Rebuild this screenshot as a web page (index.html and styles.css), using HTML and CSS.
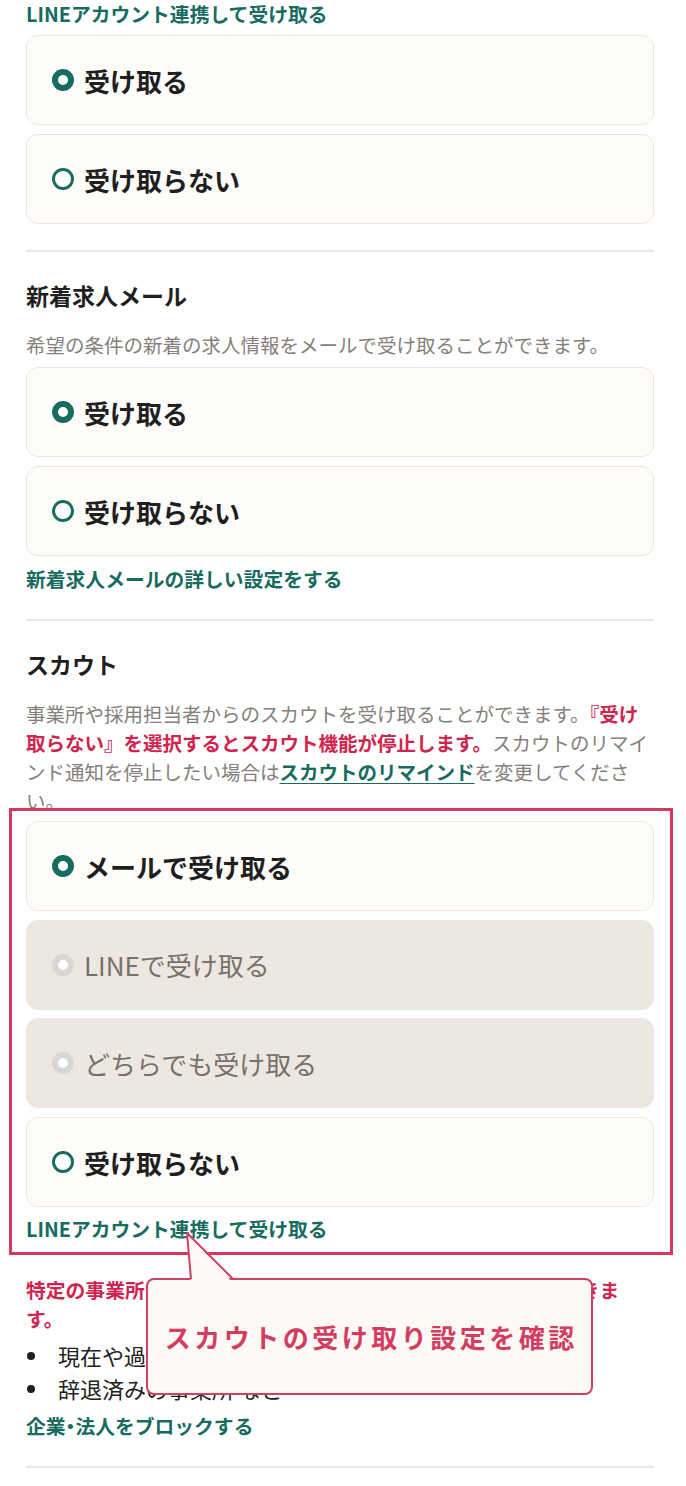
FILE: index.html
```html
<!DOCTYPE html>
<html lang="ja">
<head>
  <meta charset="UTF-8" />
  <title>受け取り設定</title>
  <link rel="stylesheet" href="styles.css">
</head>
<body>
  <div class="page">
    <a class="link" href="#">LINEアカウント連携して受け取る</a>
    <div class="options top">
      <label class="option"><span class="radio checked"></span>受け取る</label>
      <label class="option"><span class="radio"></span>受け取らない</label>
    </div>

    <hr class="divider">

    <!-- 新着求人メール -->
    <section>
      <h3 class="heading">新着求人メール</h3>
      <p class="desc">希望の条件の新着の求人情報をメールで受け取ることができます。</p>
      <div class="options">
        <label class="option"><span class="radio checked"></span>受け取る</label>
        <label class="option"><span class="radio"></span>受け取らない</label>
      </div>
      <a class="link after" href="#">新着求人メールの詳しい設定をする</a>
    </section>

    <hr class="divider">

    <!-- スカウト -->
    <section>
      <h3 class="heading">スカウト</h3>
      <p class="desc">事業所や採用担当者からのスカウトを受け取ることができます。<strong class="warn">『受け取らない』を選択するとスカウト機能が停止します。</strong>スカウトのリマインド通知を停止したい場合は<a class="inline-link" href="#">スカウトのリマインド</a>を変更してください。</p>

      <div class="highlight">
        <div class="options scout">
          <label class="option"><span class="radio checked"></span>メールで受け取る</label>
          <label class="option disabled"><span class="radio"></span>LINEで受け取る</label>
          <label class="option disabled"><span class="radio"></span>どちらでも受け取る</label>
          <label class="option"><span class="radio"></span>受け取らない</label>
        </div>
        <a class="link after" href="#">LINEアカウント連携して受け取る</a>
      </div>

      <p class="notice">特定の事業所からスカウトを受け取らないようにすることができます。</p>
      <ul class="bullets">
        <li>現在や過去に勤務した事業所</li>
        <li>辞退済みの事業所 など</li>
      </ul>
      <a class="link block-link" href="#">企業<span class="dot">・</span>法人をブロックする</a>
    </section>

    <hr class="divider">
  </div>

  <div class="callout">
    <svg class="tail" width="60" height="56" viewBox="0 0 60 56">
      <polygon points="7,3 11,53 53,53" fill="#fdfaf5" />
      <polyline points="11,49 7,3 53,49" fill="none" stroke="#d33f63" stroke-width="2" stroke-linejoin="round" />
    </svg>
    スカウトの受け取り設定を確認
  </div>
</body>
</html>
```

FILE: styles.css
```css
body {
  margin: 0;
  background: #fff;
  font-family: "Noto Sans CJK JP", "Noto Sans", sans-serif;
  color: #1f1f1f;
  position: relative;
}

.page {
  padding: 0 32px 0 26px;
}

.link {
  display: block;
  font-size: 19.8px;
  line-height: 28px;
  font-weight: 700;
  color: #176b5f;
  text-decoration: none;
}

.link.after {
  margin-top: 9px;
}

.link .dot {
  margin: 0 -5px;
}

.options {
  display: flex;
  flex-direction: column;
  gap: 9px;
  margin-top: 8px;
}

.options.top {
  margin-top: 7px;
}

.options.scout {
  margin-top: 0;
  gap: 8.7px;
}

.option {
  height: 90px;
  box-sizing: border-box;
  display: flex;
  align-items: center;
  padding-left: 25px;
  background: #fdfcf9;
  border: 1.5px solid #ece6dc;
  border-radius: 12px;
  font-size: 26px;
  font-weight: 700;
}

.option.disabled {
  background: #ece7e1;
  border-color: #ece7e1;
  color: #77716c;
  font-weight: 400;
}

.radio {
  flex: none;
  width: 22px;
  height: 22px;
  box-sizing: border-box;
  border-radius: 50%;
  border: 3.5px solid #176b5f;
  background: #fff;
  margin-right: 10px;
}

.radio.checked {
  border-width: 6.5px;
}

.disabled .radio {
  border: 6.5px solid #d9d7d5;
}

.divider {
  border: none;
  height: 2px;
  background: #ebe7e0;
  margin: 26px 0 0;
}

.heading {
  margin: 27px 0 0;
  font-size: 23px;
  line-height: 32px;
  font-weight: 700;
}

.desc {
  margin: 19px 0 0;
  font-size: 19.5px;
  line-height: 29px;
  color: #85807c;
}

.warn {
  color: #d0244f;
}

.inline-link {
  color: #176b5f;
  font-weight: 700;
  text-decoration: underline;
  text-underline-offset: 3px;
}

.highlight {
  position: relative;
  background: #fff;
  border: 3px solid #d5395e;
  margin: -7px -19px 0 -17px;
  padding: 10px 16px 9px 14px;
}

.highlight .link.after {
  margin-top: 8px;
}

.notice {
  max-width: 600px;
  margin: 20px 0 0;
  font-size: 19.8px;
  line-height: 29px;
  font-weight: 700;
  color: #d0244f;
}

.bullets {
  list-style: none;
  margin: 6px 0 0;
  padding: 0;
}

.bullets li {
  display: flex;
  align-items: center;
  font-size: 22px;
  line-height: 33px;
  color: #222;
}

.bullets li::before {
  content: "";
  flex: none;
  width: 8px;
  height: 8px;
  border-radius: 50%;
  background: #1f1f1f;
  margin: 0 23px 0 1px;
}

.block-link {
  margin-top: 7px;
}

.callout {
  position: absolute;
  left: 146px;
  top: 1278px;
  width: 447px;
  height: 117px;
  box-sizing: border-box;
  padding-left: 3.5px;
  border: 2px solid #d33f63;
  border-radius: 8px;
  background: #fdfaf5;
  display: flex;
  align-items: center;
  justify-content: center;
  font-size: 26px;
  font-weight: 700;
  letter-spacing: 3.5px;
  color: #d43c61;
}

.tail {
  position: absolute;
  left: 32px;
  top: -50px;
}
```
